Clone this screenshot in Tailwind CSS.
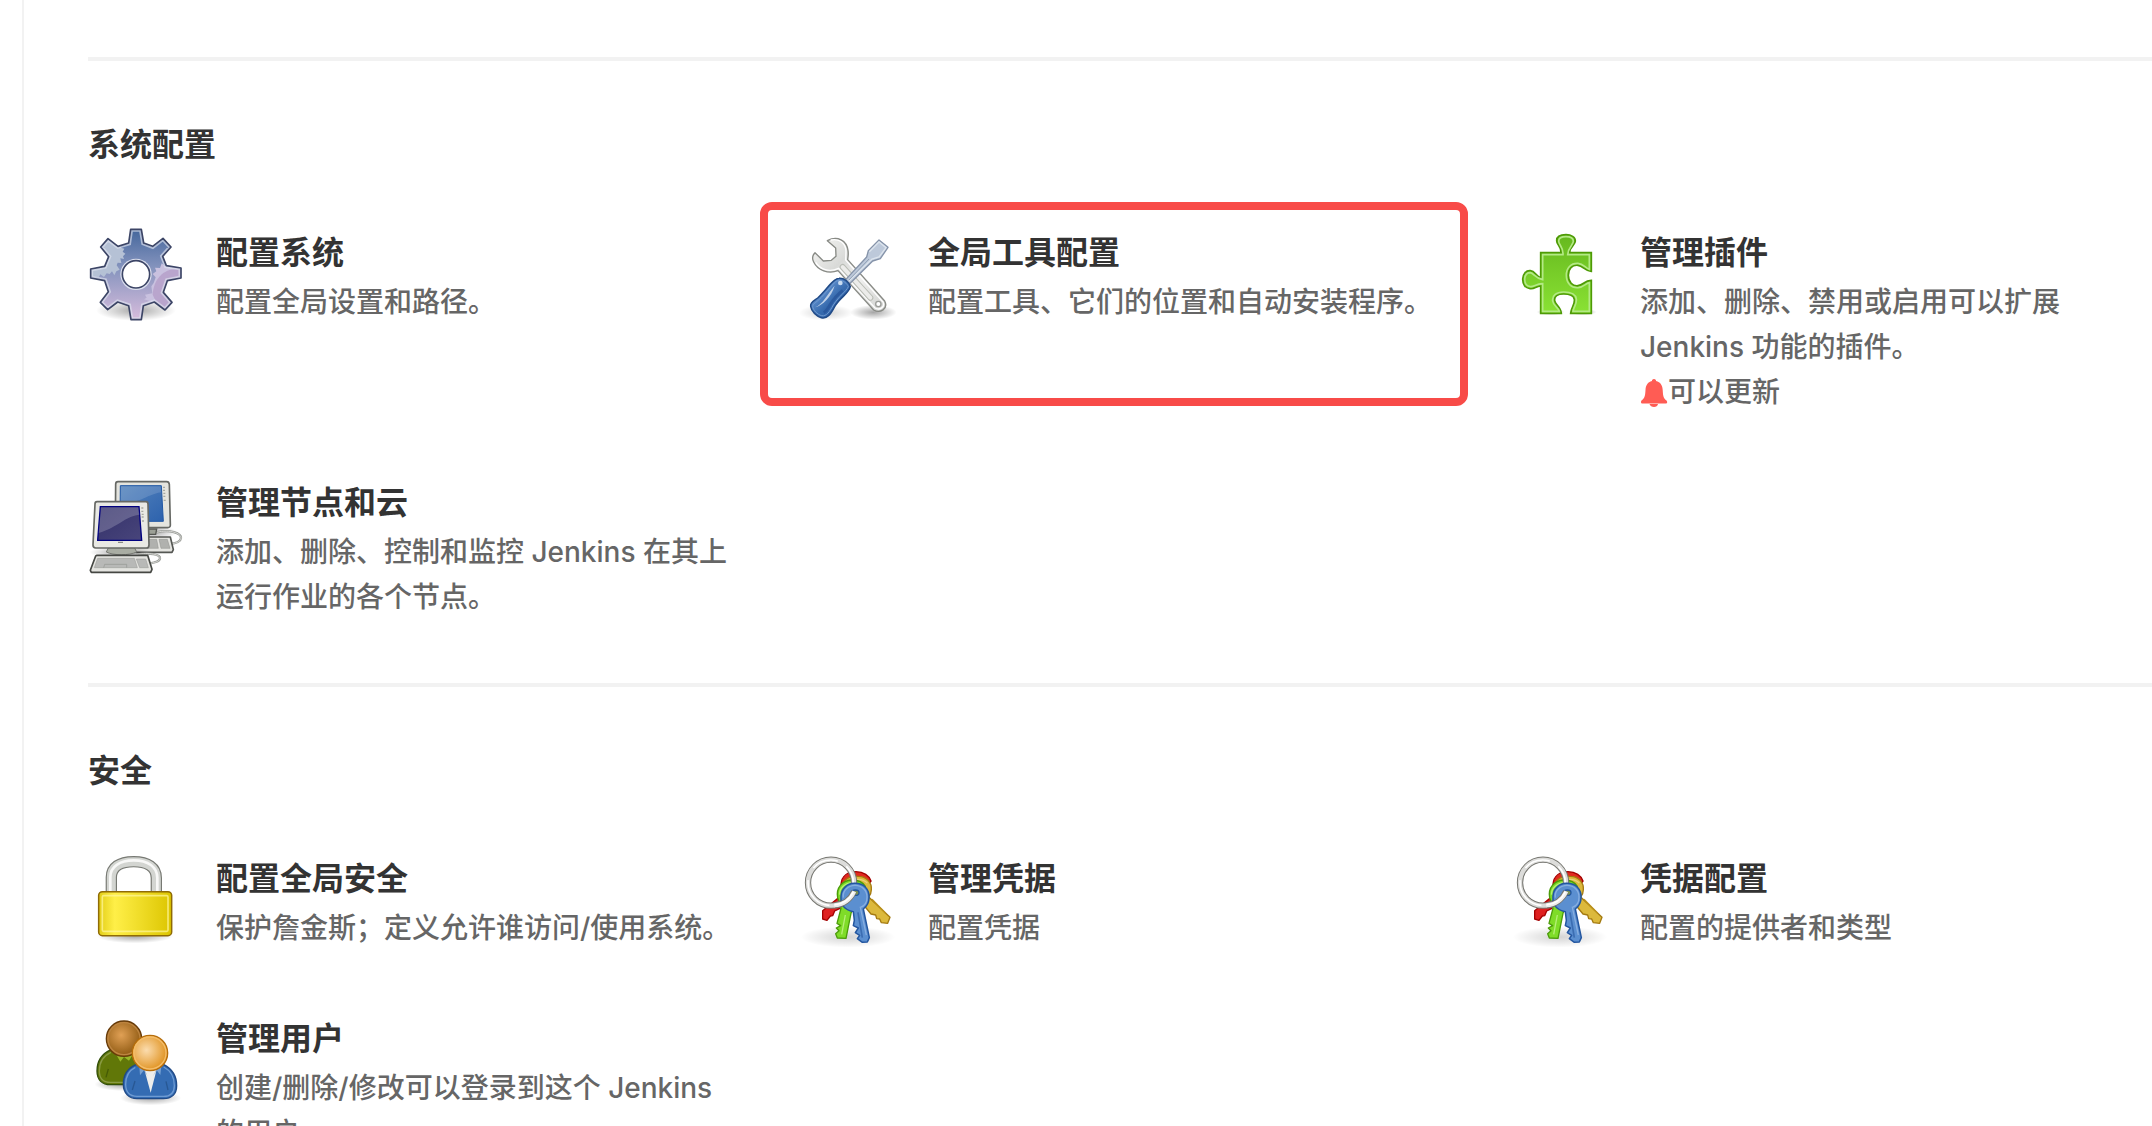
<!DOCTYPE html>
<html lang="zh-CN">

<head>
    <meta charset="UTF-8">
    <meta name="viewport" content="width=device-width, initial-scale=1.0">
    <title>系统管理</title>
    <script src="https://cdn.jsdelivr.net/npm/@tailwindcss/browser@4"></script>
</head>

<body class="bg-white overflow-x-hidden font-['Inter','Noto_Sans_CJK_SC',sans-serif] text-[28px] leading-[45px] font-medium text-[#666]">

    <!-- Shared icon used by both credential entries -->
    <svg class="absolute w-0 h-0" aria-hidden="true">
        <defs>
            <radialGradient id="shadow">
                <stop offset="0" stop-color="#000" stop-opacity=".35" />
                <stop offset="1" stop-color="#000" stop-opacity="0" />
            </radialGradient>
            <radialGradient id="softShadow">
                <stop offset="0" stop-color="#000" stop-opacity=".17" />
                <stop offset="1" stop-color="#000" stop-opacity="0" />
            </radialGradient>
            <symbol id="keys" viewBox="30 27 288 288">
                <ellipse cx="174" cy="276" rx="142" ry="32" fill="url(#softShadow)" />
                <path d="M160 146L98 197V222L111 226L121 213L128 212L134 198L150 190L175 165z" fill="#df2020" stroke="#a40000" stroke-width="4" stroke-linejoin="round" />
                <path d="M153 118C155 92 174 80 198 80C221 80 238 92 243 108L218 140H160z" fill="#e02a20" stroke="#a40000" stroke-width="4" />
                <path d="M158 120C163 100 183 91 206 94C229 94 246 113 244 134C244 144 240 151 236 156L300 217L293 235L274 233L269 222L260 221L257 210L243 207L211 168z" fill="#dcb93c" stroke="#a47a10" stroke-width="4" stroke-linejoin="round" />
                <path d="M166 122C181 101 214 96 232 114" fill="none" stroke="#e9d27a" stroke-width="4" />
                <path d="M246 163L287 205" stroke="#bd941e" stroke-width="4" />
                <path d="M143 158C137 128 157 107 184 105C203 104 218 111 226 124L190 188L183 205L168 280L142 279L137 266L147 257L139 249L152 242L141 235L153 190z" fill="#7fdc28" stroke="#4b9c0a" stroke-width="4" stroke-linejoin="round" />
                <path d="M149 149C147 128 166 114 188 113M166 210L155 268" fill="none" stroke="#b6ef76" stroke-width="4" />
                <circle cx="123" cy="113" r="69" fill="none" stroke="#75756f" stroke-width="19" />
                <circle cx="123" cy="113" r="69" fill="none" stroke="#dcdcda" stroke-width="13" />
                <circle cx="122" cy="113" r="68" fill="none" stroke="#fff" stroke-width="5" stroke-dasharray="80 30 110 40" />
                <path d="M193 115C221 114 239 133 237 159C237 174 229 185 220 192L238 278L232 291L217 292L202 281L209 271L196 263L205 249L190 242L193 226L190 200C165 195 151 180 153 154C154 131 171 116 193 115z" fill="#5b8fd0" stroke="#2356a0" stroke-width="4.500" stroke-linejoin="round" />
                <path d="M160 158C157 136 176 121 195 121C217 121 231 137 231 156C231 173 222 184 211 187L229 270" fill="none" stroke="#87aee0" stroke-width="4" />
                <path d="M204 202L217 278" stroke="#3b6db2" stroke-width="5" />
                <ellipse cx="196" cy="143" rx="11" ry="8" fill="#7c9350" stroke="#2356a0" stroke-width="4" />
                <path d="M192 139C181 164 159 179 135 181" fill="none" stroke="#75756f" stroke-width="18" />
                <path d="M193 139C181 164 159 179 133 181" fill="none" stroke="#ededec" stroke-width="12" />
                <path d="M190 141C179 163 159 177 133 180" fill="none" stroke="#fff" stroke-width="5" />
            </symbol>
        </defs>
    </svg>

    <main class="ml-[22px] -mr-2 min-h-screen border-l-2 border-[#f2f2f2] pl-16 pt-[57px]">

        <section class="border-t-4 border-[#f2f2f2] pt-[60px] pb-[63px]">
            <h2 class="text-[32px] leading-12 font-bold text-[#333]">系统配置</h2>
            <div class="mt-[59px] grid grid-cols-3 gap-x-16 gap-y-[63px]">
                <a href="#" class="flex items-start gap-8">
                    <svg class="size-24 shrink-0" viewBox="24 39 288 288" aria-hidden="true">
                        <defs>
                            <linearGradient id="gear" x1="0" y1="0" x2="0" y2="1">
                                <stop offset="0" stop-color="#42659b" />
                                <stop offset=".42" stop-color="#8493bd" />
                                <stop offset="1" stop-color="#d8bddd" />
                            </linearGradient>
                            <clipPath id="gearClip">
                                <path d="M152 43H184L191 84L218 94L249 70L273 96L248 124L259 152L303 159V189L262 197L250 232L276 262L255 285L223 261L190 272L184 314H153L146 272L113 261L83 284L61 262L85 230L74 197L32 189V162L74 154L86 125L62 96L84 71L114 94L146 84z" />
                            </clipPath>
                        </defs>
                        <ellipse cx="168" cy="286" rx="120" ry="32" fill="url(#shadow)" />
                        <g clip-path="url(#gearClip)">
                            <path d="M30 40H306V316H30z" fill="url(#gear)" />
                            <path d="M30 40H126L123 98L133 101L128 110L136 116L129 124L132 132L121 130L124 144L113 143L110 151L119 164L109 169L103 181L96 169L89 177L80 175L72 186L61 178L57 186L30 184z" fill="#b5c1d5" />
                            <path d="M306 130L254 152L245 145L240 159L225 158L229 169L218 177L227 187L221 204L214 214L217 235L195 239L200 248L192 253L207 257L230 275L300 300z" fill="#c9c1df" />
                            <path d="M306 163C255 155 221 188 218 239L230 265L290 300z" fill="#b9a5cd" />
                            <path d="M152 43H184L191 84L218 94L249 70L273 96L248 124L259 152L303 159V189L262 197L250 232L276 262L255 285L223 261L190 272L184 314H153L146 272L113 261L83 284L61 262L85 230L74 197L32 189V162L74 154L86 125L62 96L84 71L114 94L146 84z" fill="none" stroke="#dfe3f0" stroke-opacity=".65" stroke-width="15" />
                        </g>
                        <path d="M152 43H184L191 84L218 94L249 70L273 96L248 124L259 152L303 159V189L262 197L250 232L276 262L255 285L223 261L190 272L184 314H153L146 272L113 261L83 284L61 262L85 230L74 197L32 189V162L74 154L86 125L62 96L84 71L114 94L146 84z" fill="none" stroke="#3c4566" stroke-width="5" stroke-linejoin="round" />
                        <circle cx="168" cy="178" r="47" fill="#dde1ef" />
                        <circle cx="168" cy="178" r="41" fill="#fff" stroke="#3c4566" stroke-width="5" />
                    </svg>
                    <dl>
                        <dt class="mb-0.5 text-[32px] leading-[50px] font-bold text-[#333]">配置系统</dt>
                        <dd>配置全局设置和路径。</dd>
                    </dl>
                </a>
                <a href="#" class="relative flex items-start gap-8">
                    <span class="absolute -left-10 -right-5 -top-[26px] h-51 rounded-xl border-8 border-[#f84b48]"></span>
                    <svg class="size-24 shrink-0" viewBox="30 9 288 288" aria-hidden="true">
                        <defs>
                            <linearGradient id="handle" x1="0" y1="0" x2="1" y2="1">
                                <stop offset=".2" stop-color="#6c9bd8" />
                                <stop offset=".55" stop-color="#376bae" />
                                <stop offset="1" stop-color="#2858a4" />
                            </linearGradient>
                            <linearGradient id="steel" x1="0" y1="0" x2="1" y2="1">
                                <stop offset="0" stop-color="#f7f7f5" />
                                <stop offset=".35" stop-color="#d9dad8" />
                                <stop offset=".6" stop-color="#f0f0ef" />
                                <stop offset="1" stop-color="#cfd0ce" />
                            </linearGradient>
                        </defs>
                        <ellipse cx="108" cy="263" rx="82" ry="24" fill="url(#softShadow)" />
                        <ellipse cx="250" cy="262" rx="70" ry="22" fill="url(#shadow)" />
                        <path d="M112 47C143 31 170 47 174 76C176 89 174 96 173 104L284 228C296 252 270 266 251 255L144 137C115 148 83 136 71 111C66 101 67 91 75 83L100 108L124 106L138 94L137 69z" fill="url(#steel)" stroke="#888a85" stroke-width="4" stroke-linejoin="round" />
                        <path d="M122 45C148 39 168 55 168 80L167 105L279 231C286 246 269 257 255 249L146 130C118 143 91 134 77 112" fill="none" stroke="#fff" stroke-width="4" />
                        <path d="M158 126L241 218" stroke="#babdb6" stroke-width="18" stroke-linecap="round" />
                        <path d="M158 126L241 218" stroke="#ececea" stroke-width="12" stroke-linecap="round" />
                        <circle cx="265" cy="237" r="8" fill="#fff" stroke="#9a9c98" stroke-width="4" />
                        <path d="M167 164L230 96L235 77L267 45L294 67L271 101L248 108L179 176z" fill="#bdc9da" stroke="#8593a9" stroke-width="4" stroke-linejoin="round" />
                        <path d="M238 80L267 51L288 68L267 96L246 102L176 169" fill="none" stroke="#dce4ed" stroke-width="4" />
                        <path d="M176 166L237 102" stroke="#91a1b6" stroke-width="3" />
                        <path d="M147 160C163 159 177 170 181 185C176 207 151 215 134 245C122 268 112 282 94 278C80 275 64 259 62 244C60 232 72 228 83 219C104 200 121 174 135 165C139 162 143 160 147 160z" fill="url(#handle)" stroke="#204a87" stroke-width="4.500" />
                        <path d="M147 166C160 166 171 175 175 185C169 199 147 213 130 240C119 260 109 275 95 272C82 269 69 255 68 244C68 237 79 232 88 223C106 206 124 181 138 169z" fill="none" stroke="#719acf" stroke-width="3" />
                        <path d="M75 247C99 237 112 208 134 182C124 216 98 241 75 247z" fill="#fff" fill-opacity=".65" />
                        <path d="M101 263C119 254 119 225 158 196" fill="none" stroke="#234f94" stroke-width="9" stroke-opacity=".6" />
                        <circle cx="151" cy="174" r="7" fill="#c9dcf1" />
                    </svg>
                    <dl>
                        <dt class="mb-0.5 text-[32px] leading-[50px] font-bold text-[#333]">全局工具配置</dt>
                        <dd>配置工具、它们的位置和自动安装程序。</dd>
                    </dl>
                </a>
                <a href="#" class="flex items-start gap-8">
                    <svg class="size-24 shrink-0" viewBox="6 9 288 288" aria-hidden="true">
                        <defs>
                            <linearGradient id="puzzle" x1="0" y1="0" x2="0" y2="1">
                                <stop offset="0" stop-color="#66b81e" />
                                <stop offset="1" stop-color="#8ae234" />
                            </linearGradient>
                        </defs>
                        <ellipse cx="122" cy="261" rx="42" ry="10" fill="url(#shadow)" />
                        <ellipse cx="218" cy="261" rx="42" ry="10" fill="url(#shadow)" />
                        <path d="M92 83H153C154 64 140 60 140 47C140 34 153 29 168 29C184 29 196 36 196 48C196 61 179 64 179 83H244V139C224 138 220 123 204 121C186 119 175 132 175 151C175 171 188 184 204 182C221 180 222 167 244 166V265H182C184 245 195 239 193 223C191 211 179 207 161 207C143 207 132 213 134 227C136 240 153 246 154 265H92V183C76 185 74 193 60 191C46 190 38 178 38 162C39 146 48 136 61 137C76 138 77 153 92 158z" fill="url(#puzzle)" stroke="#4e9a06" stroke-width="5" />
                        <path d="M98 89H159C161 67 146 60 146 48C146 39 155 35 168 35C182 35 190 40 190 49C190 60 174 67 173 89H238V133C226 130 221 116 204 115C182 114 169 129 169 151C169 175 184 190 205 188C222 186 226 175 238 173V259H189C191 245 201 238 199 222C197 206 182 201 161 201C139 201 126 211 128 228C130 243 145 248 148 259H98V176C77 177 73 186 61 185C50 184 44 176 44 162C45 150 51 143 61 143C72 145 75 159 98 164z" fill="none" stroke="#b4e986" stroke-width="5" />
                    </svg>
                    <dl>
                        <dt class="mb-0.5 text-[32px] leading-[50px] font-bold text-[#333]">管理插件</dt>
                        <dd>添加、删除、禁用或启用可以扩展 Jenkins 功能的插件。</dd>
                        <dd class="flex items-center">
                            <svg class="w-7 h-7 shrink-0" viewBox="0 0 28 28" aria-hidden="true">
                                <path d="M14 0C12.500 0 11.800 1 12 2C7.500 3 5.800 6.500 5.500 11C5.200 17 4.500 19.500 1.500 21.500C.5 22.500 1 24.500 2 24.500H26C27.500 24.500 27.500 22.500 26.500 21.500C23.500 19.500 23 17 22.700 11C22.500 6.500 20.500 3 16 2C16.200 1 15.500 0 14 0zM9.500 25C10 26.800 12 28 14 28C16 28 17.800 26.800 18 25z" fill="#ff5c54" />
                            </svg>
                            可以更新
                        </dd>
                    </dl>
                </a>
                <a href="#" class="flex items-start gap-8">
                    <svg class="size-24 shrink-0" viewBox="54 51 288 288" aria-hidden="true">
                        <defs>
                            <linearGradient id="screenBack" x1="0" y1="0" x2="1" y2="1">
                                <stop offset="0" stop-color="#5584bd" />
                                <stop offset="1" stop-color="#2d62ad" />
                            </linearGradient>
                            <linearGradient id="screenFront" x1="0" y1="0" x2="1" y2="1">
                                <stop offset="0" stop-color="#34316a" />
                                <stop offset="1" stop-color="#48457b" />
                            </linearGradient>
                        </defs>
                        <ellipse cx="245" cy="214" rx="75" ry="22" fill="url(#shadow)" />
                        <path d="M260 214C300 204 334 217 333 231C332 243 318 247 298 249" fill="none" stroke="#979a95" stroke-width="7" />
                        <path d="M260 214C300 204 334 217 333 231C332 243 318 247 298 249" fill="none" stroke="#d8d8d5" stroke-width="3" />
                        <path d="M220 204H260L257 220H215z" fill="#9ca096" stroke="#555753" stroke-width="4" />
                        <path d="M190 228H301L310 266L306 274H190z" fill="#e4e4e0" stroke="#555753" stroke-width="5" stroke-linejoin="round" />
                        <path d="M205 235H260L265 262H205zM267 235H292L300 262H273z" fill="#b0b1ae" stroke="#8d8f8b" stroke-width="1.500" />
                        <path d="M144 62H290Q297 62 298 70L301 190Q302 200 293 200H144Q136 200 136 190L137 70Q137 62 144 62z" fill="#e4e4de" stroke="#666864" stroke-width="5" />
                        <path d="M151 74H274L280 181H150z" fill="url(#screenBack)" stroke="#2158a5" stroke-width="3" />
                        <path d="M153 76H272L273 94C227 102 222 123 152 129z" fill="#fff" fill-opacity=".14" />
                        <path d="M279 79H285M279 88H285M280 97H286M280 106H286M281 118H287" stroke="#a6a8a1" stroke-width="4" />
                        <ellipse cx="153" cy="274" rx="95" ry="18" fill="url(#shadow)" />
                        <path d="M198 281C240 273 271 281 270 292C269 303 251 305 235 308" fill="none" stroke="#979a95" stroke-width="7" />
                        <path d="M198 281C240 273 271 281 270 292C269 303 251 305 235 308" fill="none" stroke="#d8d8d5" stroke-width="3" />
                        <path d="M116 259H193L200 273C177 284 130 284 109 273z" fill="#a9ada3" stroke="#777973" stroke-width="3" />
                        <path d="M81 122H228Q234 122 234 129L237 251Q237 261 229 261H77Q69 261 69 252L75 129Q75 122 81 122z" fill="#e9e9e4" stroke="#666864" stroke-width="5" />
                        <path d="M91 137H207L215 238H83z" fill="url(#screenFront)" stroke="#000080" stroke-width="4" />
                        <path d="M93 139H205L208 161C158 169 153 194 86 216z" fill="#fff" fill-opacity=".2" />
                        <path d="M214 141H220M214 151H220M215 160H221M215 168H221M216 180H222" stroke="#a6a8a1" stroke-width="4" />
                        <path d="M144 244H159" stroke="#777973" stroke-width="3" />
                        <path d="M81 283H233L246 325L242 334H64L61 328L77 285z" fill="#e4e4e0" stroke="#454743" stroke-width="5" stroke-linejoin="round" />
                        <path d="M83 292H193L202 320H73zM199 294H227L235 320H209z" fill="#b8b9b7" stroke="#a0a29f" stroke-width="2" />
                        <path d="M101 320L104 310H170V320" fill="none" stroke="#939591" stroke-width="2" />
                    </svg>
                    <dl>
                        <dt class="mb-0.5 text-[32px] leading-[50px] font-bold text-[#333]">管理节点和云</dt>
                        <dd>添加、删除、控制和监控 Jenkins 在其上运行作业的各个节点。</dd>
                    </dl>
                </a>
            </div>
        </section>

        <section class="border-t-4 border-[#f2f2f2] pt-[60px] pb-[63px]">
            <h2 class="text-[32px] leading-12 font-bold text-[#333]">安全</h2>
            <div class="mt-[59px] grid grid-cols-3 gap-x-16 gap-y-[63px]">
                <a href="#" class="flex items-start gap-8">
                    <svg class="size-24 shrink-0" viewBox="24 42 288 288" aria-hidden="true">
                        <defs>
                            <linearGradient id="lock">
                                <stop offset="0" stop-color="#e2ce18" />
                                <stop offset=".22" stop-color="#ffef48" />
                                <stop offset="1" stop-color="#dcc500" />
                            </linearGradient>
                        </defs>
                        <ellipse cx="165" cy="288" rx="115" ry="22" fill="url(#shadow)" />
                        <path d="M94 157V112C94 82 118 65 161 65C204 65 229 82 229 114V157" fill="none" stroke="#777973" stroke-width="34" />
                        <path d="M94 157V112C94 82 118 65 161 65C204 65 229 82 229 114V157" fill="none" stroke="#d3d5d1" stroke-width="27" />
                        <path d="M91 157V111C91 80 119 61 161 61C204 61 232 81 232 114V157" fill="none" stroke="#f8f8f7" stroke-width="8" />
                        <rect x="56" y="155" width="219" height="132" rx="11" fill="url(#lock)" stroke="#8f6b05" stroke-width="4.500" />
                        <rect x="67" y="167" width="197" height="107" rx="4" fill="none" stroke="#fff7a0" stroke-opacity=".7" stroke-width="5" />
                    </svg>
                    <dl>
                        <dt class="mb-0.5 text-[32px] leading-[50px] font-bold text-[#333]">配置全局安全</dt>
                        <dd>保护詹金斯；定义允许谁访问/使用系统。</dd>
                    </dl>
                </a>
                <a href="#" class="flex items-start gap-8">
                    <svg class="size-24 shrink-0" aria-hidden="true"><use href="#keys" /></svg>
                    <dl>
                        <dt class="mb-0.5 text-[32px] leading-[50px] font-bold text-[#333]">管理凭据</dt>
                        <dd>配置凭据</dd>
                    </dl>
                </a>
                <a href="#" class="flex items-start gap-8">
                    <svg class="size-24 shrink-0" aria-hidden="true"><use href="#keys" /></svg>
                    <dl>
                        <dt class="mb-0.5 text-[32px] leading-[50px] font-bold text-[#333]">凭据配置</dt>
                        <dd>配置的提供者和类型</dd>
                    </dl>
                </a>
                <a href="#" class="flex items-start gap-8">
                    <svg class="size-24 shrink-0" viewBox="24 42 288 288" aria-hidden="true">
                        <defs>
                            <radialGradient id="headBack" cx=".42" cy=".4" r=".6">
                                <stop offset="0" stop-color="#e0a055" />
                                <stop offset="1" stop-color="#8f5a12" />
                            </radialGradient>
                            <radialGradient id="headFront" cx=".4" cy=".42" r=".6">
                                <stop offset="0" stop-color="#fbdcae" />
                                <stop offset="1" stop-color="#e0921f" />
                            </radialGradient>
                        </defs>
                        <ellipse cx="128" cy="253" rx="85" ry="20" fill="url(#shadow)" />
                        <ellipse cx="212" cy="294" rx="92" ry="22" fill="url(#shadow)" />
                        <path d="M93 149C64 162 51 185 51 213C51 240 67 254 91 254H160L198 170L158 148z" fill="#617708" stroke="#324f08" stroke-width="4" />
                        <path d="M93 157C69 168 58 187 58 212C58 235 70 247 91 247H145" fill="none" stroke="#899a43" stroke-width="4" />
                        <path d="M109 164L121 185L132 171L147 182L158 164z" fill="#9ab72a" />
                        <path d="M78 232L85 207" stroke="#465c05" stroke-width="4" />
                        <circle cx="132" cy="116" r="53" fill="url(#headBack)" stroke="#673b0a" stroke-width="4" />
                        <circle cx="132" cy="116" r="48" fill="none" stroke="#bd8542" stroke-width="4" />
                        <path d="M168 194C142 205 130 225 130 253C130 280 147 296 171 296H250C275 296 290 282 290 257C290 229 276 206 250 193z" fill="#346cb3" stroke="#204a87" stroke-width="4" />
                        <path d="M166 202C146 212 137 229 137 253C137 276 150 289 171 289H250C271 289 283 278 283 257C283 232 272 212 251 201" fill="none" stroke="#6e9bd3" stroke-width="4" />
                        <path d="M192 205H231L212 278z" fill="#eeeeec" />
                        <path d="M178 199L180 226L192 211L203 229L190 202zM244 199L241 225L230 211L218 230L233 202z" fill="#78a1d1" />
                        <path d="M157 270L165 243M264 270L258 244" stroke="#285894" stroke-width="4" />
                        <circle cx="210" cy="159" r="53" fill="url(#headFront)" stroke="#b56d0b" stroke-width="4" />
                        <circle cx="210" cy="159" r="48" fill="none" stroke="#f4bd69" stroke-width="4" />
                    </svg>
                    <dl>
                        <dt class="mb-0.5 text-[32px] leading-[50px] font-bold text-[#333]">管理用户</dt>
                        <dd>创建/删除/修改可以登录到这个 Jenkins 的用户</dd>
                    </dl>
                </a>
            </div>
        </section>
    </main>
</body>

</html>
